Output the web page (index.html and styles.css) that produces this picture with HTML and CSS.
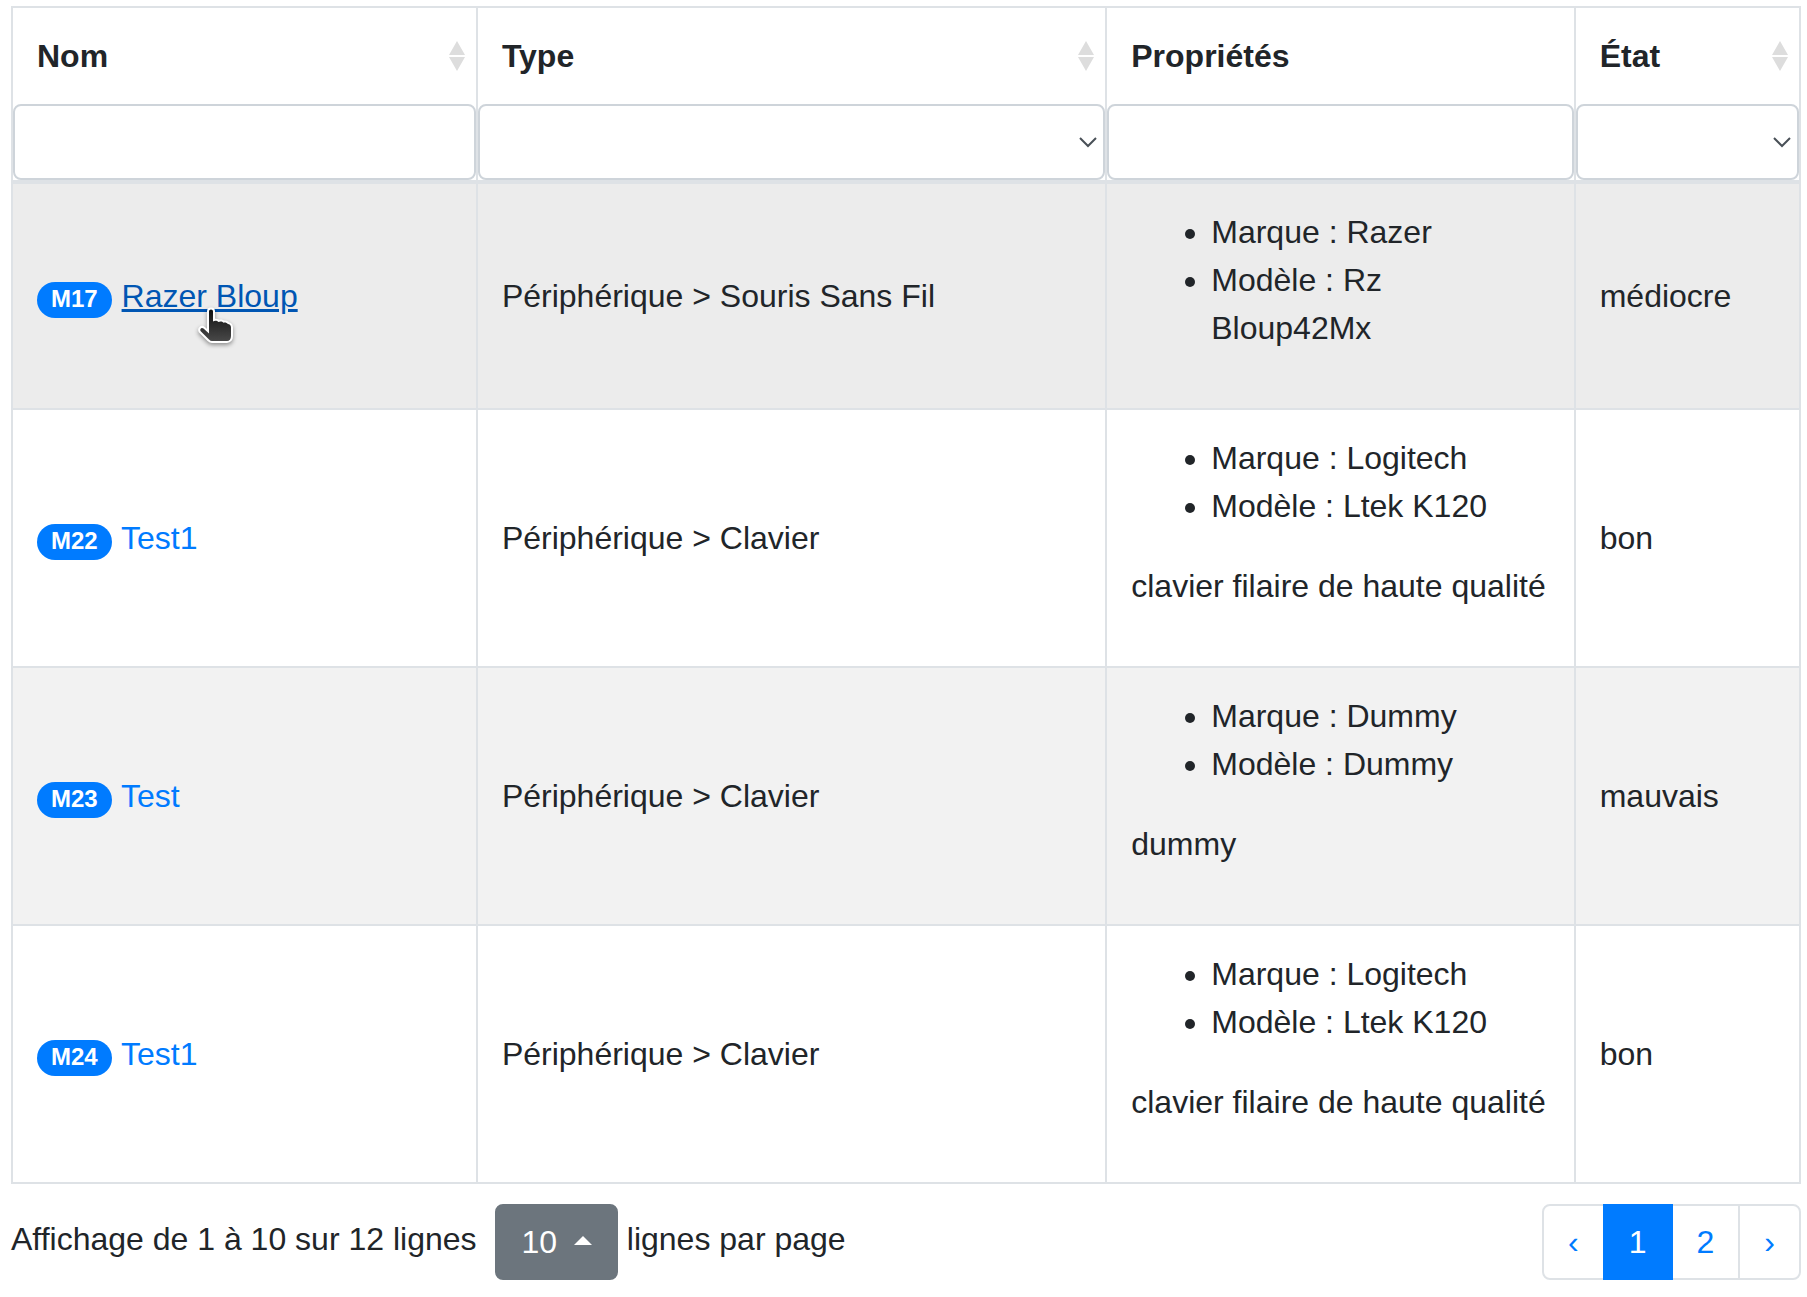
FILE: index.html
```html
<!DOCTYPE html>
<html lang="fr">
<head>
    <meta charset="UTF-8">
    <meta name="viewport" content="width=device-width, initial-scale=1.0">
    <title>Matériel</title>
    <link rel="stylesheet" href="styles.css">
</head>
<body>
    <main>
        <table class="table">
            <colgroup>
                <col class="col-nom">
                <col class="col-type">
                <col class="col-props">
                <col>
            </colgroup>
            <thead>
                <tr>
                    <th>
                        <div class="th-inner sortable">
                            <span id="label-nom">Nom</span>
                            <svg class="sort-icon" viewBox="0 0 16 30" aria-hidden="true"><path d="M8 0l8 14H0zM0 16h16L8 30z"/></svg>
                        </div>
                        <input class="form-control" type="text" aria-labelledby="label-nom">
                    </th>
                    <th>
                        <div class="th-inner sortable">
                            <span id="label-type">Type</span>
                            <svg class="sort-icon" viewBox="0 0 16 30" aria-hidden="true"><path d="M8 0l8 14H0zM0 16h16L8 30z"/></svg>
                        </div>
                        <div class="select-wrap">
                            <select class="form-control" aria-labelledby="label-type">
                                <option></option>
                            </select>
                            <svg class="chevron" viewBox="0 0 18 11" aria-hidden="true"><path d="M1 1l8 8 8-8"/></svg>
                        </div>
                    </th>
                    <th>
                        <div class="th-inner"><span id="label-props">Propriétés</span></div>
                        <input class="form-control" type="text" aria-labelledby="label-props">
                    </th>
                    <th>
                        <div class="th-inner sortable">
                            <span id="label-etat">État</span>
                            <svg class="sort-icon" viewBox="0 0 16 30" aria-hidden="true"><path d="M8 0l8 14H0zM0 16h16L8 30z"/></svg>
                        </div>
                        <div class="select-wrap">
                            <select class="form-control" aria-labelledby="label-etat">
                                <option></option>
                            </select>
                            <svg class="chevron" viewBox="0 0 18 11" aria-hidden="true"><path d="M1 1l8 8 8-8"/></svg>
                        </div>
                    </th>
                </tr>
            </thead>
            <tbody>
                <tr class="hover">
                    <td>
                        <span class="badge">M17</span>
                        <span class="pointed">
                            <a href="#M17">Razer Bloup</a>
                            <svg class="pointer" viewBox="0 0 38 40" aria-hidden="true">
                                <defs>
                                    <linearGradient id="hand" x1="0" y1="0" x2="0" y2="1">
                                        <stop offset="0" stop-color="#111"/>
                                        <stop offset="1" stop-color="#484848"/>
                                    </linearGradient>
                                </defs>
                                <path fill="url(#hand)" stroke="#fff" stroke-width="4" stroke-linejoin="round" paint-order="stroke" d="M14 3.500c1.200 0 2 .8 2 2V15.500c1.500-1 4-1 5.500.5 1.500-1 4-.7 5 .8 1.500-.6 3.500 0 4.200 1.200 2 0 3.300 1.500 3.300 3.500v8.500c0 3-1.500 5-4 5H15c-1 0-2-.5-3-1.500L3.500 25c-1-2 1-4 3-2.500L12 27.500V5.500c0-1.200.8-2 2-2z"/>
                            </svg>
                        </span>
                    </td>
                    <td>Périphérique &gt; Souris Sans Fil</td>
                    <td>
                        <ul>
                            <li>Marque : Razer</li>
                            <li>Modèle : Rz Bloup42Mx</li>
                        </ul>
                    </td>
                    <td>médiocre</td>
                </tr>
                <tr>
                    <td><span class="badge">M22</span> <a href="#M22">Test1</a></td>
                    <td>Périphérique &gt; Clavier</td>
                    <td>
                        <ul>
                            <li>Marque : Logitech</li>
                            <li>Modèle : Ltek K120</li>
                        </ul>
                        <p>clavier filaire de haute qualité</p>
                    </td>
                    <td>bon</td>
                </tr>
                <tr>
                    <td><span class="badge">M23</span> <a href="#M23">Test</a></td>
                    <td>Périphérique &gt; Clavier</td>
                    <td>
                        <ul>
                            <li>Marque : Dummy</li>
                            <li>Modèle : Dummy</li>
                        </ul>
                        <p>dummy</p>
                    </td>
                    <td>mauvais</td>
                </tr>
                <tr>
                    <td><span class="badge">M24</span> <a href="#M24">Test1</a></td>
                    <td>Périphérique &gt; Clavier</td>
                    <td>
                        <ul>
                            <li>Marque : Logitech</li>
                            <li>Modèle : Ltek K120</li>
                        </ul>
                        <p>clavier filaire de haute qualité</p>
                    </td>
                    <td>bon</td>
                </tr>
            </tbody>
        </table>

        <div class="table-footer">
            <div>
                <span class="info">Affichage de 1 à 10 sur 12 lignes</span>
                <button type="button" class="btn">10 <span class="caret"></span></button>
                lignes par page
            </div>
            <nav aria-label="Pagination">
                <ul class="pagination">
                    <li><a href="#prev">‹</a></li>
                    <li class="active"><a href="#1">1</a></li>
                    <li><a href="#2">2</a></li>
                    <li><a href="#next">›</a></li>
                </ul>
            </nav>
        </div>
    </main>
</body>
</html>
```

FILE: styles.css
```css
* {
    box-sizing: border-box;
}

body {
    font-family: "Liberation Sans", Arial, sans-serif;
    font-size: 32px;
    line-height: 48px;
    color: #212529;
    background: #fff;
    margin: 0;
}

main {
    padding: 6px 6px 16px 11px;
}

a {
    color: #007bff;
    text-decoration: none;
}

a:hover,
.hover a {
    color: #0056b3;
    text-decoration: underline;
}

/* table */
.table {
    width: 100%;
    table-layout: fixed;
    border-collapse: collapse;
}

.col-nom {
    width: 26%;
}

.col-type {
    width: 35.2%;
}

.col-props {
    width: 26.2%;
}

.table th,
.table td {
    border: 2px solid #dee2e6;
}

.table th {
    padding: 0;
    text-align: left;
    border-bottom-width: 4px;
}

.table td {
    padding: 24px;
    vertical-align: middle;
}

.table tbody tr:nth-child(odd) {
    background: #f2f2f2;
}

.table tbody tr.hover {
    background: #ececec;
}

.table ul {
    margin: 0 0 32px;
    padding-left: 80px;
}

.table p {
    margin: 0 0 32px;
}

.th-inner {
    padding: 24px;
}

.sortable {
    display: flex;
    align-items: center;
    justify-content: space-between;
    padding-right: 11px;
    cursor: pointer;
}

.sort-icon {
    width: 16px;
    height: 30px;
    fill: #ddd;
}

.form-control {
    display: block;
    width: 100%;
    height: 76px;
    padding: 12px 24px;
    font: inherit;
    font-weight: normal;
    color: #495057;
    background: #fff;
    border: 2px solid #ced4da;
    border-radius: 8px;
    appearance: none;
}

.select-wrap {
    position: relative;
}

.chevron {
    position: absolute;
    top: 33px;
    right: 8px;
    width: 18px;
    height: 11px;
    fill: none;
    stroke: #495057;
    stroke-width: 2;
    pointer-events: none;
}

.badge {
    display: inline-block;
    margin-right: 1px;
    padding: 5px 14px 7px;
    font-size: 24px;
    font-weight: bold;
    line-height: 24px;
    color: #fff;
    background: #007bff;
    border-radius: 20px;
}

.pointed {
    position: relative;
}

.pointer {
    position: absolute;
    top: 28px;
    left: 75px;
    width: 38px;
    height: 40px;
    filter: drop-shadow(0 2px 2px rgba(0, 0, 0, 0.4));
}

/* footer */
.table-footer {
    display: flex;
    justify-content: space-between;
    margin-top: 20px;
}

.info {
    margin-right: 10px;
}

.btn {
    padding: 12px 24px;
    font: inherit;
    color: #fff;
    background: #6c757d;
    border: 2px solid #6c757d;
    border-radius: 8px;
    vertical-align: middle;
    cursor: pointer;
}

.caret {
    display: inline-block;
    margin-left: 8px;
    vertical-align: 8px;
    border-right: 9px solid transparent;
    border-bottom: 9px solid #fff;
    border-left: 9px solid transparent;
}

.pagination {
    display: flex;
    margin: 0;
    padding: 0;
    list-style: none;
}

.pagination a {
    display: block;
    padding: 16px 24px;
    line-height: 40px;
    background: #fff;
    border: 2px solid #dee2e6;
}

.pagination li + li {
    margin-left: -2px;
}

.pagination li:first-child a {
    border-radius: 8px 0 0 8px;
}

.pagination li:last-child a {
    border-radius: 0 8px 8px 0;
}

.pagination .active {
    z-index: 1;
}

.pagination .active a {
    color: #fff;
    background: #007bff;
    border-color: #007bff;
}
```
